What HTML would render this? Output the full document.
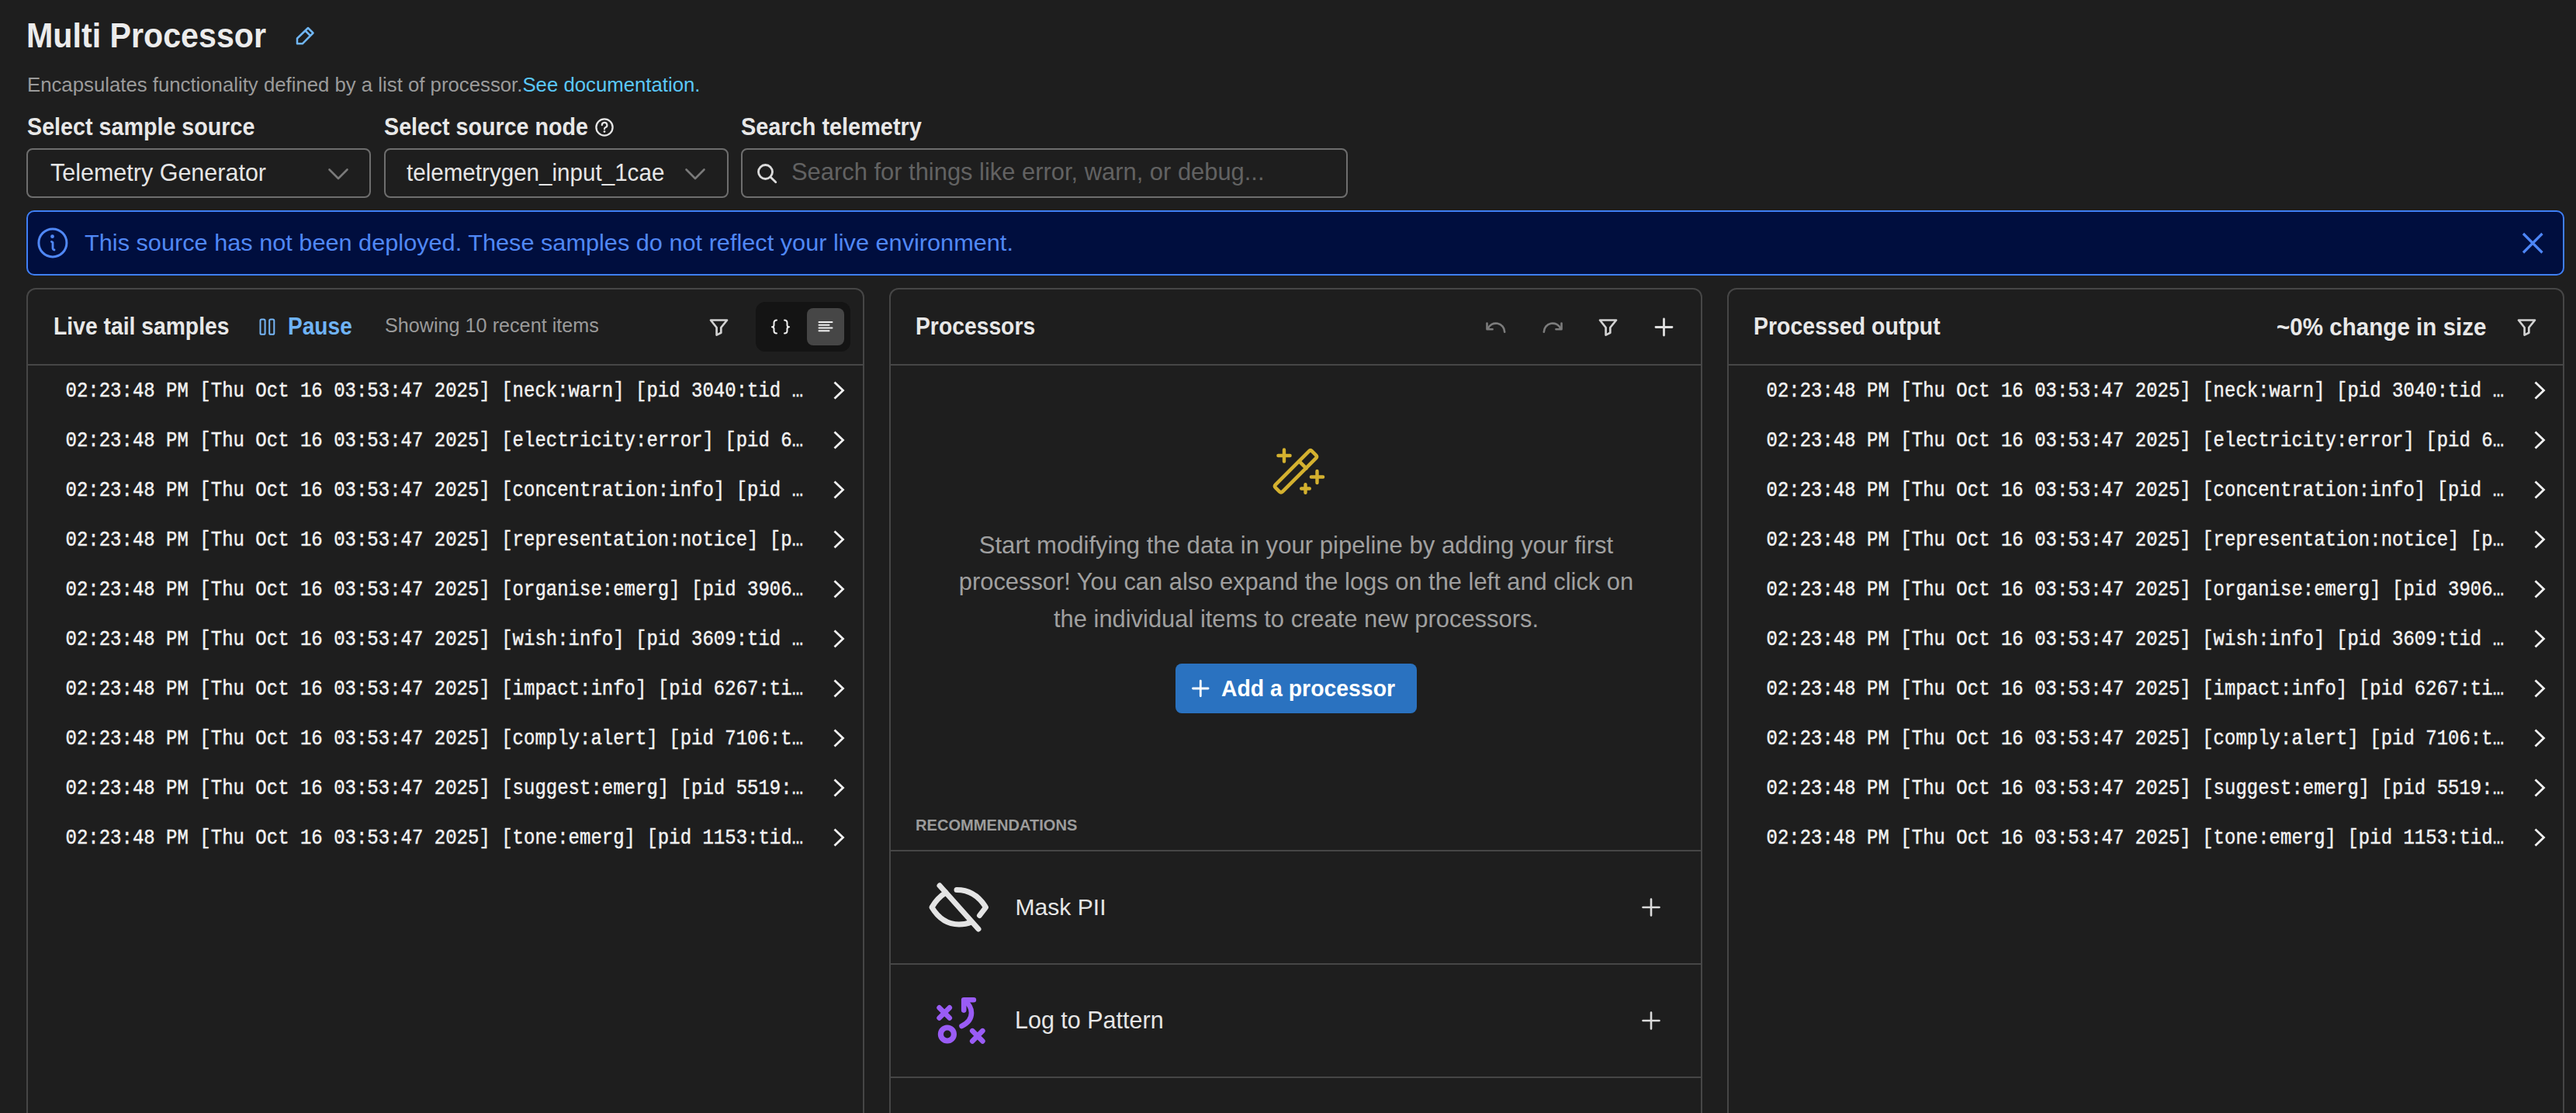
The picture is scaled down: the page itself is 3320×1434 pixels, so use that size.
<!DOCTYPE html>
<html><head><meta charset="utf-8"><title>Multi Processor</title>
<style>
html,body{margin:0;padding:0;width:3320px;height:1434px;overflow:hidden;background:#1e1e1e;}
body{position:relative;font-family:'Liberation Sans', sans-serif;}
</style></head><body>
<div style="position:absolute;left:34px;top:27.12px;white-space:pre;font-family:'Liberation Sans', sans-serif;font-size:41.2px;line-height:41.2px;font-weight:700;color:#ececec;transform:scaleY(1.08);transform-origin:0 34.875800000000005px;">Multi Processor</div><div style="position:absolute;left:35px;top:96.69px;white-space:pre;font-family:'Liberation Sans', sans-serif;font-size:25.76px;line-height:25.76px;font-weight:400;color:#9b9b9b;">Encapsulates functionality defined by a list of processor.<span style="color:#5ac8fa">See documentation.</span></div><div style="position:absolute;left:35px;top:149.71px;white-space:pre;font-family:'Liberation Sans', sans-serif;font-size:28.7px;line-height:28.7px;font-weight:700;color:#e8e8e8;transform:scaleY(1.07);transform-origin:0 24.29455px;">Select sample source</div><div style="position:absolute;left:495px;top:149.71px;white-space:pre;font-family:'Liberation Sans', sans-serif;font-size:28.7px;line-height:28.7px;font-weight:700;color:#e8e8e8;transform:scaleY(1.07);transform-origin:0 24.29455px;">Select source node</div><div style="position:absolute;left:955px;top:149.54px;white-space:pre;font-family:'Liberation Sans', sans-serif;font-size:28.9px;line-height:28.9px;font-weight:700;color:#e8e8e8;transform:scaleY(1.07);transform-origin:0 24.46385px;">Search telemetry</div><div style="position:absolute;left:34px;top:191px;width:444px;height:64px;box-sizing:border-box;border:2px solid #6e6e6e;border-radius:8px;"></div><div style="position:absolute;left:495px;top:191px;width:444px;height:64px;box-sizing:border-box;border:2px solid #6e6e6e;border-radius:8px;"></div><div style="position:absolute;left:955px;top:191px;width:782px;height:64px;box-sizing:border-box;border:2px solid #6e6e6e;border-radius:8px;"></div><div style="position:absolute;left:65px;top:207.18px;white-space:pre;font-family:'Liberation Sans', sans-serif;font-size:30.5px;line-height:30.5px;font-weight:400;color:#e6e6e6;transform:scaleY(1.03);transform-origin:0 25.818250000000003px;">Telemetry Generator</div><div style="position:absolute;left:524px;top:207.94px;white-space:pre;font-family:'Liberation Sans', sans-serif;font-size:29.6px;line-height:29.6px;font-weight:400;color:#e6e6e6;transform:scaleY(1.05);transform-origin:0 25.056400000000004px;">telemetrygen_input_1cae</div><div style="position:absolute;left:1020px;top:206.84px;white-space:pre;font-family:'Liberation Sans', sans-serif;font-size:30.9px;line-height:30.9px;font-weight:400;color:#626262;transform:scaleY(1.03);transform-origin:0 26.15685px;">Search for things like error, warn, or debug...</div><div style="position:absolute;left:34px;top:271px;width:3271px;height:84px;box-sizing:border-box;border:2px solid #3f7ff5;border-radius:10px;background:#000e3e;"></div><div style="position:absolute;left:109px;top:298.01px;white-space:pre;font-family:'Liberation Sans', sans-serif;font-size:30.7px;line-height:30.7px;font-weight:400;color:#5088f6;transform:scaleY(0.95);transform-origin:0 25.98755px;">This source has not been deployed. These samples do not reflect your live environment.</div><div style="position:absolute;left:34px;top:371px;width:1080px;height:1200px;box-sizing:border-box;border:2px solid #464646;border-radius:12px;background:#1e1e1e;"></div><div style="position:absolute;left:36px;top:469px;width:1076px;height:2px;background:#464646;"></div><div style="position:absolute;left:1146px;top:371px;width:1048px;height:1200px;box-sizing:border-box;border:2px solid #464646;border-radius:12px;background:#1e1e1e;"></div><div style="position:absolute;left:1148px;top:469px;width:1044px;height:2px;background:#464646;"></div><div style="position:absolute;left:2226px;top:371px;width:1079px;height:1200px;box-sizing:border-box;border:2px solid #464646;border-radius:12px;background:#1e1e1e;"></div><div style="position:absolute;left:2228px;top:469px;width:1075px;height:2px;background:#464646;"></div><div style="position:absolute;left:69px;top:407.04px;white-space:pre;font-family:'Liberation Sans', sans-serif;font-size:28.3px;line-height:28.3px;font-weight:700;color:#e8e8e8;transform:scaleY(1.1);transform-origin:0 23.95595px;">Live tail samples</div><div style="position:absolute;left:371px;top:408.21px;white-space:pre;font-family:'Liberation Sans', sans-serif;font-size:28.1px;line-height:28.1px;font-weight:700;color:#6fb3f6;transform:scaleY(1.1);transform-origin:0 23.78665px;">Pause</div><div style="position:absolute;left:496px;top:407.17px;white-space:pre;font-family:'Liberation Sans', sans-serif;font-size:25.2px;line-height:25.2px;font-weight:400;color:#9a9a9a;transform:scaleY(1.03);transform-origin:0 21.3318px;">Showing 10 recent items</div><div style="position:absolute;left:974px;top:389px;width:122px;height:64px;background:#141414;border-radius:12px;"></div><div style="position:absolute;left:1040px;top:397px;width:48px;height:48px;background:#464646;border-radius:8px;"></div><div style="position:absolute;left:1180px;top:407.04px;white-space:pre;font-family:'Liberation Sans', sans-serif;font-size:28.3px;line-height:28.3px;font-weight:700;color:#e8e8e8;transform:scaleY(1.13);transform-origin:0 23.95595px;">Processors</div><div style="position:absolute;left:2260px;top:406.87px;white-space:pre;font-family:'Liberation Sans', sans-serif;font-size:28.5px;line-height:28.5px;font-weight:700;color:#e8e8e8;transform:scaleY(1.07);transform-origin:0 24.12525px;">Processed output</div><div style="position:absolute;left:2934px;top:406.94px;white-space:pre;font-family:'Liberation Sans', sans-serif;font-size:29.6px;line-height:29.6px;font-weight:700;color:#e8e8e8;transform:scaleY(1.05);transform-origin:0 25.056400000000004px;">~0% change in size</div><div style="position:absolute;left:84.5px;top:492.60px;white-space:pre;font-family:'Liberation Mono', monospace;font-size:24.0px;line-height:24.0px;font-weight:400;color:#f2f2f2;transform:scaleY(1.14);transform-origin:0 18.396px;-webkit-text-stroke:0.4px #f2f2f2;">02:23:48 PM [Thu Oct 16 03:53:47 2025] [neck:warn] [pid 3040:tid …</div><div style="position:absolute;left:2276.5px;top:492.60px;white-space:pre;font-family:'Liberation Mono', monospace;font-size:24.0px;line-height:24.0px;font-weight:400;color:#f2f2f2;transform:scaleY(1.14);transform-origin:0 18.396px;-webkit-text-stroke:0.4px #f2f2f2;">02:23:48 PM [Thu Oct 16 03:53:47 2025] [neck:warn] [pid 3040:tid …</div><div style="position:absolute;left:84.5px;top:556.60px;white-space:pre;font-family:'Liberation Mono', monospace;font-size:24.0px;line-height:24.0px;font-weight:400;color:#f2f2f2;transform:scaleY(1.14);transform-origin:0 18.396px;-webkit-text-stroke:0.4px #f2f2f2;">02:23:48 PM [Thu Oct 16 03:53:47 2025] [electricity:error] [pid 6…</div><div style="position:absolute;left:2276.5px;top:556.60px;white-space:pre;font-family:'Liberation Mono', monospace;font-size:24.0px;line-height:24.0px;font-weight:400;color:#f2f2f2;transform:scaleY(1.14);transform-origin:0 18.396px;-webkit-text-stroke:0.4px #f2f2f2;">02:23:48 PM [Thu Oct 16 03:53:47 2025] [electricity:error] [pid 6…</div><div style="position:absolute;left:84.5px;top:620.60px;white-space:pre;font-family:'Liberation Mono', monospace;font-size:24.0px;line-height:24.0px;font-weight:400;color:#f2f2f2;transform:scaleY(1.14);transform-origin:0 18.396px;-webkit-text-stroke:0.4px #f2f2f2;">02:23:48 PM [Thu Oct 16 03:53:47 2025] [concentration:info] [pid …</div><div style="position:absolute;left:2276.5px;top:620.60px;white-space:pre;font-family:'Liberation Mono', monospace;font-size:24.0px;line-height:24.0px;font-weight:400;color:#f2f2f2;transform:scaleY(1.14);transform-origin:0 18.396px;-webkit-text-stroke:0.4px #f2f2f2;">02:23:48 PM [Thu Oct 16 03:53:47 2025] [concentration:info] [pid …</div><div style="position:absolute;left:84.5px;top:684.60px;white-space:pre;font-family:'Liberation Mono', monospace;font-size:24.0px;line-height:24.0px;font-weight:400;color:#f2f2f2;transform:scaleY(1.14);transform-origin:0 18.396px;-webkit-text-stroke:0.4px #f2f2f2;">02:23:48 PM [Thu Oct 16 03:53:47 2025] [representation:notice] [p…</div><div style="position:absolute;left:2276.5px;top:684.60px;white-space:pre;font-family:'Liberation Mono', monospace;font-size:24.0px;line-height:24.0px;font-weight:400;color:#f2f2f2;transform:scaleY(1.14);transform-origin:0 18.396px;-webkit-text-stroke:0.4px #f2f2f2;">02:23:48 PM [Thu Oct 16 03:53:47 2025] [representation:notice] [p…</div><div style="position:absolute;left:84.5px;top:748.60px;white-space:pre;font-family:'Liberation Mono', monospace;font-size:24.0px;line-height:24.0px;font-weight:400;color:#f2f2f2;transform:scaleY(1.14);transform-origin:0 18.396px;-webkit-text-stroke:0.4px #f2f2f2;">02:23:48 PM [Thu Oct 16 03:53:47 2025] [organise:emerg] [pid 3906…</div><div style="position:absolute;left:2276.5px;top:748.60px;white-space:pre;font-family:'Liberation Mono', monospace;font-size:24.0px;line-height:24.0px;font-weight:400;color:#f2f2f2;transform:scaleY(1.14);transform-origin:0 18.396px;-webkit-text-stroke:0.4px #f2f2f2;">02:23:48 PM [Thu Oct 16 03:53:47 2025] [organise:emerg] [pid 3906…</div><div style="position:absolute;left:84.5px;top:812.60px;white-space:pre;font-family:'Liberation Mono', monospace;font-size:24.0px;line-height:24.0px;font-weight:400;color:#f2f2f2;transform:scaleY(1.14);transform-origin:0 18.396px;-webkit-text-stroke:0.4px #f2f2f2;">02:23:48 PM [Thu Oct 16 03:53:47 2025] [wish:info] [pid 3609:tid …</div><div style="position:absolute;left:2276.5px;top:812.60px;white-space:pre;font-family:'Liberation Mono', monospace;font-size:24.0px;line-height:24.0px;font-weight:400;color:#f2f2f2;transform:scaleY(1.14);transform-origin:0 18.396px;-webkit-text-stroke:0.4px #f2f2f2;">02:23:48 PM [Thu Oct 16 03:53:47 2025] [wish:info] [pid 3609:tid …</div><div style="position:absolute;left:84.5px;top:876.60px;white-space:pre;font-family:'Liberation Mono', monospace;font-size:24.0px;line-height:24.0px;font-weight:400;color:#f2f2f2;transform:scaleY(1.14);transform-origin:0 18.396px;-webkit-text-stroke:0.4px #f2f2f2;">02:23:48 PM [Thu Oct 16 03:53:47 2025] [impact:info] [pid 6267:ti…</div><div style="position:absolute;left:2276.5px;top:876.60px;white-space:pre;font-family:'Liberation Mono', monospace;font-size:24.0px;line-height:24.0px;font-weight:400;color:#f2f2f2;transform:scaleY(1.14);transform-origin:0 18.396px;-webkit-text-stroke:0.4px #f2f2f2;">02:23:48 PM [Thu Oct 16 03:53:47 2025] [impact:info] [pid 6267:ti…</div><div style="position:absolute;left:84.5px;top:940.60px;white-space:pre;font-family:'Liberation Mono', monospace;font-size:24.0px;line-height:24.0px;font-weight:400;color:#f2f2f2;transform:scaleY(1.14);transform-origin:0 18.396px;-webkit-text-stroke:0.4px #f2f2f2;">02:23:48 PM [Thu Oct 16 03:53:47 2025] [comply:alert] [pid 7106:t…</div><div style="position:absolute;left:2276.5px;top:940.60px;white-space:pre;font-family:'Liberation Mono', monospace;font-size:24.0px;line-height:24.0px;font-weight:400;color:#f2f2f2;transform:scaleY(1.14);transform-origin:0 18.396px;-webkit-text-stroke:0.4px #f2f2f2;">02:23:48 PM [Thu Oct 16 03:53:47 2025] [comply:alert] [pid 7106:t…</div><div style="position:absolute;left:84.5px;top:1004.60px;white-space:pre;font-family:'Liberation Mono', monospace;font-size:24.0px;line-height:24.0px;font-weight:400;color:#f2f2f2;transform:scaleY(1.14);transform-origin:0 18.396px;-webkit-text-stroke:0.4px #f2f2f2;">02:23:48 PM [Thu Oct 16 03:53:47 2025] [suggest:emerg] [pid 5519:…</div><div style="position:absolute;left:2276.5px;top:1004.60px;white-space:pre;font-family:'Liberation Mono', monospace;font-size:24.0px;line-height:24.0px;font-weight:400;color:#f2f2f2;transform:scaleY(1.14);transform-origin:0 18.396px;-webkit-text-stroke:0.4px #f2f2f2;">02:23:48 PM [Thu Oct 16 03:53:47 2025] [suggest:emerg] [pid 5519:…</div><div style="position:absolute;left:84.5px;top:1068.60px;white-space:pre;font-family:'Liberation Mono', monospace;font-size:24.0px;line-height:24.0px;font-weight:400;color:#f2f2f2;transform:scaleY(1.14);transform-origin:0 18.396px;-webkit-text-stroke:0.4px #f2f2f2;">02:23:48 PM [Thu Oct 16 03:53:47 2025] [tone:emerg] [pid 1153:tid…</div><div style="position:absolute;left:2276.5px;top:1068.60px;white-space:pre;font-family:'Liberation Mono', monospace;font-size:24.0px;line-height:24.0px;font-weight:400;color:#f2f2f2;transform:scaleY(1.14);transform-origin:0 18.396px;-webkit-text-stroke:0.4px #f2f2f2;">02:23:48 PM [Thu Oct 16 03:53:47 2025] [tone:emerg] [pid 1153:tid…</div><div style="position:absolute;left:1070.5px;width:1200px;top:686.67px;text-align:center;white-space:pre;font-family:'Liberation Sans', sans-serif;font-size:31.1px;line-height:31.1px;color:#a0a0a0">Start modifying the data in your pipeline by adding your first</div><div style="position:absolute;left:1070.5px;width:1200px;top:734.89px;text-align:center;white-space:pre;font-family:'Liberation Sans', sans-serif;font-size:30.85px;line-height:30.85px;color:#a0a0a0">processor! You can also expand the logs on the left and click on</div><div style="position:absolute;left:1070.5px;width:1200px;top:782.84px;text-align:center;white-space:pre;font-family:'Liberation Sans', sans-serif;font-size:30.9px;line-height:30.9px;color:#a0a0a0">the individual items to create new processors.</div><div style="position:absolute;left:1515px;top:855px;width:311px;height:64px;background:#2a72c0;border-radius:8px;"></div><div style="position:absolute;left:1574px;top:872.96px;white-space:pre;font-family:'Liberation Sans', sans-serif;font-size:28.4px;line-height:28.4px;font-weight:700;color:#ffffff;transform:scaleY(1.06);transform-origin:0 24.0406px;">Add a processor</div><div style="position:absolute;left:1180px;top:1053.49px;white-space:pre;font-family:'Liberation Sans', sans-serif;font-size:20.1px;line-height:20.1px;font-weight:700;color:#9c9c9c;transform:scaleY(1.05);transform-origin:0 17.014650000000003px;">RECOMMENDATIONS</div><div style="position:absolute;left:1148px;top:1095px;width:1044px;height:2px;background:#464646;"></div><div style="position:absolute;left:1148px;top:1241px;width:1044px;height:2px;background:#464646;"></div><div style="position:absolute;left:1148px;top:1387px;width:1044px;height:2px;background:#464646;"></div><div style="position:absolute;left:1308.5px;top:1153.52px;white-space:pre;font-family:'Liberation Sans', sans-serif;font-size:30.1px;line-height:30.1px;font-weight:400;color:#e6e6e6;">Mask PII</div><div style="position:absolute;left:1308px;top:1299.18px;white-space:pre;font-family:'Liberation Sans', sans-serif;font-size:30.5px;line-height:30.5px;font-weight:400;color:#e6e6e6;">Log to Pattern</div>
<svg style="position:absolute;left:0;top:0" width="3320" height="1434" viewBox="0 0 3320 1434"><path d="M383 56.3 L383 49.5 L397 36 L403.5 42.5 L389.8 56.3 Z M393.5 39.5 L400 46" fill="none" stroke="#70b6f6" stroke-width="2.5" stroke-linecap="round" stroke-linejoin="round" /><circle cx="779" cy="164" r="10.6" fill="none" stroke="#e6e6e6" stroke-width="2.3"/><path d="M775.8 161.2 a3.3 3.3 0 1 1 4.4 3.1 q-1.2 0.5 -1.2 2" fill="none" stroke="#e6e6e6" stroke-width="2.2" stroke-linecap="round" stroke-linejoin="round" /><circle cx="779" cy="169.6" r="1.4" fill="#e6e6e6"/><path d="M424.5 218.5 L436 230 L447.5 218.5" fill="none" stroke="#7a7a7a" stroke-width="2.6" stroke-linecap="round" stroke-linejoin="round" /><path d="M884.5 218.5 L896 230 L907.5 218.5" fill="none" stroke="#7a7a7a" stroke-width="2.6" stroke-linecap="round" stroke-linejoin="round" /><circle cx="986.5" cy="221.5" r="9" fill="none" stroke="#dcdcdc" stroke-width="2.8"/><path d="M993.2 228.2 L999.8 234.8" fill="none" stroke="#dcdcdc" stroke-width="2.8" stroke-linecap="round" stroke-linejoin="round" /><circle cx="67.9" cy="312.9" r="18" fill="none" stroke="#5088f6" stroke-width="3"/><circle cx="67.5" cy="304.7" r="2.4" fill="#5088f6"/><path d="M66.4 311.4 L68 312.5 L68 320 Q68.5 322 70 322" fill="none" stroke="#5088f6" stroke-width="2.8" stroke-linecap="round" stroke-linejoin="round" /><path d="M3252 301 L3276.5 325.5 M3276.5 301 L3252 325.5" fill="none" stroke="#4d86f6" stroke-width="3.2" stroke-linejoin="round" stroke-linecap="butt"/><rect x="335.5" y="411.6" width="6.1" height="19.2" rx="1.6" fill="none" stroke="#76b6f6" stroke-width="2"/><rect x="347.2" y="411.6" width="6.1" height="19.2" rx="1.6" fill="none" stroke="#76b6f6" stroke-width="2"/><path d="M916.0 412.5 L937.0 412.5 L929.3 422.0 L929.3 428.8 L923.6 431.6 L923.6 422.0 Z" fill="none" stroke="#d2d2d2" stroke-width="2.7" stroke-linecap="round" stroke-linejoin="round" /><path d="M2062.0 412.5 L2083.0 412.5 L2075.3 422.0 L2075.3 428.8 L2069.6 431.6 L2069.6 422.0 Z" fill="none" stroke="#d2d2d2" stroke-width="2.7" stroke-linecap="round" stroke-linejoin="round" /><path d="M3246.0 412.5 L3267.0 412.5 L3259.3 422.0 L3259.3 428.8 L3253.6 431.6 L3253.6 422.0 Z" fill="none" stroke="#d2d2d2" stroke-width="2.7" stroke-linecap="round" stroke-linejoin="round" /><path d="M1001 412.5 Q997.5 412.5 997.5 416 L997.5 419 Q997.5 421 995 421.3 Q997.5 421.6 997.5 423.6 L997.5 426.5 Q997.5 429.5 1001 429.5" fill="none" stroke="#f0f0f0" stroke-width="2" stroke-linecap="round" stroke-linejoin="round" /><path d="M1011 412.5 Q1014.5 412.5 1014.5 416 L1014.5 419 Q1014.5 421 1017 421.3 Q1014.5 421.6 1014.5 423.6 L1014.5 426.5 Q1014.5 429.5 1011 429.5" fill="none" stroke="#f0f0f0" stroke-width="2" stroke-linecap="round" stroke-linejoin="round" /><path d="M1055.5 415 L1072.5 415" fill="none" stroke="#f0f0f0" stroke-width="2" stroke-linecap="round" stroke-linejoin="round" /><path d="M1055.5 418.7 L1068.5 418.7" fill="none" stroke="#f0f0f0" stroke-width="2" stroke-linecap="round" stroke-linejoin="round" /><path d="M1055.5 422.4 L1072.5 422.4" fill="none" stroke="#f0f0f0" stroke-width="2" stroke-linecap="round" stroke-linejoin="round" /><path d="M1055.5 426.2 L1068.5 426.2" fill="none" stroke="#f0f0f0" stroke-width="2" stroke-linecap="round" stroke-linejoin="round" /><path d="M1916.5 416.5 L1916.5 424.3 L1923.6 424.3" fill="none" stroke="#7c7c7c" stroke-width="2.6" stroke-linecap="round" stroke-linejoin="round" /><path d="M1917.5 423.5 A11.3 11.3 0 0 1 1939.2 427.8" fill="none" stroke="#7c7c7c" stroke-width="2.6" stroke-linecap="round" stroke-linejoin="round" /><path d="M2012.5 416.5 L2012.5 424.3 L2005.4 424.3" fill="none" stroke="#7c7c7c" stroke-width="2.6" stroke-linecap="round" stroke-linejoin="round" /><path d="M2011.5 423.5 A11.3 11.3 0 0 0 1989.8 427.8" fill="none" stroke="#7c7c7c" stroke-width="2.6" stroke-linecap="round" stroke-linejoin="round" /><path d="M2134.0 421.5 L2155.0 421.5 M2144.5 411.0 L2144.5 432.0" fill="none" stroke="#dedede" stroke-width="2.8" stroke-linecap="round" stroke-linejoin="round" /><path d="M2117.5 1169 L2138.5 1169 M2128 1158.5 L2128 1179.5" fill="none" stroke="#dcdcdc" stroke-width="2.6" stroke-linecap="round" stroke-linejoin="round" /><path d="M2117.5 1315 L2138.5 1315 M2128 1304.5 L2128 1325.5" fill="none" stroke="#dcdcdc" stroke-width="2.6" stroke-linecap="round" stroke-linejoin="round" /><path d="M1537.5 887 L1557.1 887 M1547.3 877.2 L1547.3 896.8" fill="none" stroke="#ffffff" stroke-width="2.8" stroke-linecap="round" stroke-linejoin="round" /><path d="M1075.5 492.5 L1086.5 503 L1075.5 513.5" fill="none" stroke="#f0f0f0" stroke-width="2.8" stroke-linecap="butt" stroke-linejoin="miter"/><path d="M3267.5 492.5 L3278.5 503 L3267.5 513.5" fill="none" stroke="#f0f0f0" stroke-width="2.8" stroke-linecap="butt" stroke-linejoin="miter"/><path d="M1075.5 556.5 L1086.5 567 L1075.5 577.5" fill="none" stroke="#f0f0f0" stroke-width="2.8" stroke-linecap="butt" stroke-linejoin="miter"/><path d="M3267.5 556.5 L3278.5 567 L3267.5 577.5" fill="none" stroke="#f0f0f0" stroke-width="2.8" stroke-linecap="butt" stroke-linejoin="miter"/><path d="M1075.5 620.5 L1086.5 631 L1075.5 641.5" fill="none" stroke="#f0f0f0" stroke-width="2.8" stroke-linecap="butt" stroke-linejoin="miter"/><path d="M3267.5 620.5 L3278.5 631 L3267.5 641.5" fill="none" stroke="#f0f0f0" stroke-width="2.8" stroke-linecap="butt" stroke-linejoin="miter"/><path d="M1075.5 684.5 L1086.5 695 L1075.5 705.5" fill="none" stroke="#f0f0f0" stroke-width="2.8" stroke-linecap="butt" stroke-linejoin="miter"/><path d="M3267.5 684.5 L3278.5 695 L3267.5 705.5" fill="none" stroke="#f0f0f0" stroke-width="2.8" stroke-linecap="butt" stroke-linejoin="miter"/><path d="M1075.5 748.5 L1086.5 759 L1075.5 769.5" fill="none" stroke="#f0f0f0" stroke-width="2.8" stroke-linecap="butt" stroke-linejoin="miter"/><path d="M3267.5 748.5 L3278.5 759 L3267.5 769.5" fill="none" stroke="#f0f0f0" stroke-width="2.8" stroke-linecap="butt" stroke-linejoin="miter"/><path d="M1075.5 812.5 L1086.5 823 L1075.5 833.5" fill="none" stroke="#f0f0f0" stroke-width="2.8" stroke-linecap="butt" stroke-linejoin="miter"/><path d="M3267.5 812.5 L3278.5 823 L3267.5 833.5" fill="none" stroke="#f0f0f0" stroke-width="2.8" stroke-linecap="butt" stroke-linejoin="miter"/><path d="M1075.5 876.5 L1086.5 887 L1075.5 897.5" fill="none" stroke="#f0f0f0" stroke-width="2.8" stroke-linecap="butt" stroke-linejoin="miter"/><path d="M3267.5 876.5 L3278.5 887 L3267.5 897.5" fill="none" stroke="#f0f0f0" stroke-width="2.8" stroke-linecap="butt" stroke-linejoin="miter"/><path d="M1075.5 940.5 L1086.5 951 L1075.5 961.5" fill="none" stroke="#f0f0f0" stroke-width="2.8" stroke-linecap="butt" stroke-linejoin="miter"/><path d="M3267.5 940.5 L3278.5 951 L3267.5 961.5" fill="none" stroke="#f0f0f0" stroke-width="2.8" stroke-linecap="butt" stroke-linejoin="miter"/><path d="M1075.5 1004.5 L1086.5 1015 L1075.5 1025.5" fill="none" stroke="#f0f0f0" stroke-width="2.8" stroke-linecap="butt" stroke-linejoin="miter"/><path d="M3267.5 1004.5 L3278.5 1015 L3267.5 1025.5" fill="none" stroke="#f0f0f0" stroke-width="2.8" stroke-linecap="butt" stroke-linejoin="miter"/><path d="M1075.5 1068.5 L1086.5 1079 L1075.5 1089.5" fill="none" stroke="#f0f0f0" stroke-width="2.8" stroke-linecap="butt" stroke-linejoin="miter"/><path d="M3267.5 1068.5 L3278.5 1079 L3267.5 1089.5" fill="none" stroke="#f0f0f0" stroke-width="2.8" stroke-linecap="butt" stroke-linejoin="miter"/><path d="M1644 624.3 L1687 581.3 Q1689 579.3 1691 581.3 L1696 586.3 Q1698 588.3 1696 590.3 L1653 633.3 Q1651 635.3 1649 633.3 L1644 628.3 Q1642 626.3 1644 624.3 Z" fill="none" stroke="#d4b12f" stroke-width="4.6" stroke-linecap="round" stroke-linejoin="round" /><path d="M1674.5 594.3 L1683.5 603.3" fill="none" stroke="#d4b12f" stroke-width="4.6" stroke-linecap="round" stroke-linejoin="round" /><path d="M1647.4 587 L1662.6 587 M1655 579.4 L1655 594.6" fill="none" stroke="#d4b12f" stroke-width="4.4" stroke-linecap="round" stroke-linejoin="round" /><path d="M1689.9 614.5 L1705.1 614.5 M1697.5 606.9 L1697.5 622.1" fill="none" stroke="#d4b12f" stroke-width="4.4" stroke-linecap="round" stroke-linejoin="round" /><path d="M1677.2 629.5 L1687.8 629.5 M1682.5 624.2 L1682.5 634.8" fill="none" stroke="#d4b12f" stroke-width="4.4" stroke-linecap="round" stroke-linejoin="round" /><path d="M1211 1141 L1261 1197" fill="none" stroke="#e4e4e4" stroke-width="7" stroke-linecap="round" stroke-linejoin="round" /><path d="M1219 1150 C1211 1155 1205 1162 1201 1169 C1210 1184 1222 1191 1236 1191 C1242 1191 1247 1190 1252 1188" fill="none" stroke="#e4e4e4" stroke-width="7" stroke-linecap="round" stroke-linejoin="round" /><path d="M1233 1146.5 C1250 1146.5 1262 1155 1270.5 1169 L1262.5 1179.5" fill="none" stroke="#e4e4e4" stroke-width="7" stroke-linecap="round" stroke-linejoin="round" /><path d="M1210.6 1298.3 L1223.8 1311.5 M1223.8 1298.3 L1210.6 1311.5" fill="none" stroke="#9a5cf5" stroke-width="6.6" stroke-linecap="round" stroke-linejoin="round" /><path d="M1253.2 1328.2 L1266.4 1341.4 M1266.4 1328.2 L1253.2 1341.4" fill="none" stroke="#9a5cf5" stroke-width="6.6" stroke-linecap="round" stroke-linejoin="round" /><circle cx="1220.9" cy="1332.5" r="8.5" fill="none" stroke="#9a5cf5" stroke-width="7.2"/><path d="M1239.5 1322 Q1252 1316 1252 1305 Q1252 1296 1243.5 1289.5" fill="none" stroke="#9a5cf5" stroke-width="6.6" stroke-linecap="round" stroke-linejoin="round" /><path d="M1242.2 1301.6 L1242.2 1288.3 L1254.9 1288.3" fill="none" stroke="#9a5cf5" stroke-width="6.6" stroke-linecap="round" stroke-linejoin="round" /></svg>
</body></html>
